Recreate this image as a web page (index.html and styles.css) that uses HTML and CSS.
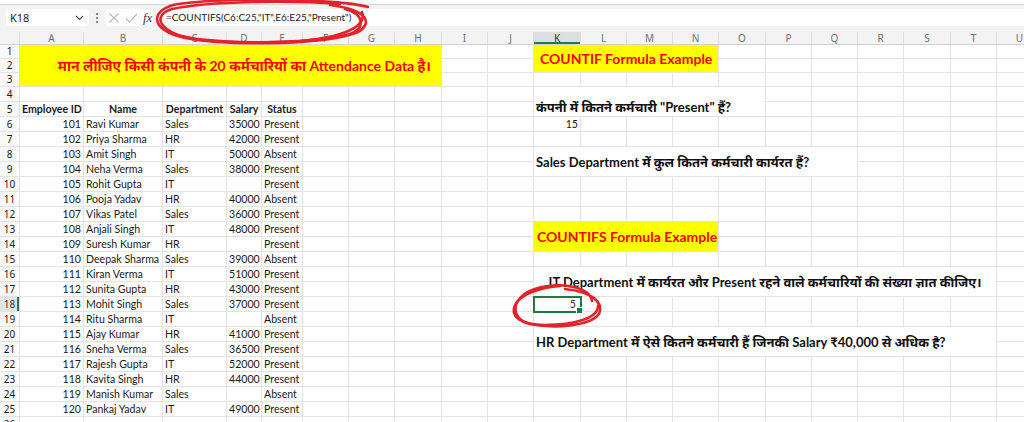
FILE: index.html
```html
<!DOCTYPE html>
<html lang="hi">
<head>
<meta charset="utf-8">
<title>COUNTIFS Example</title>
<link rel="stylesheet" href="styles.css">
</head>
<body>
<div class="app">
  <div class="ribbon-edge"></div>
  <div class="fbar">
    <div class="namebox">
      <span>K18</span>
      <svg class="chev" width="9" height="6" viewBox="0 0 9 6"><path d="M1 1 L4.5 4.5 L8 1" fill="none" stroke="#444" stroke-width="1.1"/></svg>
    </div>
    <div class="vdots"><i></i><i></i><i></i></div>
    <div class="fxbox">
      <svg width="12" height="12" viewBox="0 0 12 12"><path d="M1.5 1.5 L10.5 10.5 M10.5 1.5 L1.5 10.5" stroke="#b8b8b8" stroke-width="1.1"/></svg>
      <svg width="13" height="12" viewBox="0 0 13 12"><path d="M1 6.5 L4.5 10 L12 2" fill="none" stroke="#b8b8b8" stroke-width="1.1"/></svg>
      <span class="fx">fx</span>
    </div>
    <div class="formula">=COUNTIFS(C6:C25,"IT",E6:E25,"Present")</div>
  </div>
  <table class="sheet">
    <colgroup>
      <col class="w20"><col class="w64"><col class="w79"><col class="w64"><col class="w35"><col class="w41">
      <col class="w46"><col class="w46"><col class="w47"><col class="w46"><col class="w46">
      <col class="w47"><col class="w46"><col class="w46"><col class="w46"><col class="w47">
      <col class="w46"><col class="w46"><col class="w46"><col class="w47"><col class="w46"><col class="w46">
    </colgroup>
    <thead>
      <tr class="colhead">
        <th class="corner"></th><th>A</th><th>B</th><th>C</th><th>D</th><th>E</th><th>F</th><th>G</th><th>H</th><th>I</th><th>J</th><th class="active">K</th><th>L</th><th>M</th><th>N</th><th>O</th><th>P</th><th>Q</th><th>R</th><th>S</th><th>T</th><th>U</th>
      </tr>
    </thead>
    <tbody>
      <tr class="h14"><th>1</th><td colspan="8" rowspan="3" class="title">मान लीजिए किसी कंपनी के 20 कर्मचारियों का Attendance Data है।</td><td></td><td></td><td colspan="4" rowspan="2" class="banner">COUNTIF Formula Example</td><td></td><td></td><td></td><td></td><td></td><td></td><td></td></tr>
      <tr class="h14"><th>2</th><td></td><td></td><td></td><td></td><td></td><td></td><td></td><td></td><td></td></tr>
      <tr class="h14"><th>3</th><td></td><td></td><td></td><td></td><td></td><td></td><td></td><td></td><td></td><td></td><td></td><td></td><td></td></tr>
      <tr><th>4</th><td></td><td></td><td></td><td></td><td></td><td></td><td></td><td></td><td></td><td></td><td colspan="5" rowspan="2" class="q q-bottom">कंपनी में कितने कर्मचारी "Present" हैं?</td><td></td><td></td><td></td><td></td><td></td><td></td></tr>
      <tr><th>5</th><td class="hd">Employee ID</td><td class="hd">Name</td><td class="hd">Department</td><td class="hd">Salary</td><td class="hd">Status</td><td></td><td></td><td></td><td></td><td></td><td></td><td></td><td></td><td></td><td></td><td></td></tr>
      <tr><th>6</th><td class="n">101</td><td>Ravi Kumar</td><td>Sales</td><td class="n">35000</td><td>Present</td><td></td><td></td><td></td><td></td><td></td><td class="n">15</td><td></td><td></td><td></td><td></td><td></td><td></td><td></td><td></td><td></td><td></td></tr>
      <tr><th>7</th><td class="n">102</td><td>Priya Sharma</td><td>HR</td><td class="n">42000</td><td>Present</td><td></td><td></td><td></td><td></td><td></td><td></td><td></td><td></td><td></td><td></td><td></td><td></td><td></td><td></td><td></td><td></td></tr>
      <tr><th>8</th><td class="n">103</td><td>Amit Singh</td><td>IT</td><td class="n">50000</td><td>Absent</td><td></td><td></td><td></td><td></td><td></td><td colspan="7" rowspan="2" class="q">Sales Department में कुल कितने कर्मचारी कार्यरत हैं?</td><td></td><td></td><td></td><td></td></tr>
      <tr><th>9</th><td class="n">104</td><td>Neha Verma</td><td>Sales</td><td class="n">38000</td><td>Present</td><td></td><td></td><td></td><td></td><td></td><td></td><td></td><td></td><td></td></tr>
      <tr><th>10</th><td class="n">105</td><td>Rohit Gupta</td><td>IT</td><td class="n"></td><td>Present</td><td></td><td></td><td></td><td></td><td></td><td></td><td></td><td></td><td></td><td></td><td></td><td></td><td></td><td></td><td></td><td></td></tr>
      <tr><th>11</th><td class="n">106</td><td>Pooja Yadav</td><td>HR</td><td class="n">40000</td><td>Absent</td><td></td><td></td><td></td><td></td><td></td><td></td><td></td><td></td><td></td><td></td><td></td><td></td><td></td><td></td><td></td><td></td></tr>
      <tr><th>12</th><td class="n">107</td><td>Vikas Patel</td><td>Sales</td><td class="n">36000</td><td>Present</td><td></td><td></td><td></td><td></td><td></td><td></td><td></td><td></td><td></td><td></td><td></td><td></td><td></td><td></td><td></td><td></td></tr>
      <tr><th>13</th><td class="n">108</td><td>Anjali Singh</td><td>IT</td><td class="n">48000</td><td>Present</td><td></td><td></td><td></td><td></td><td></td><td colspan="4" rowspan="2" class="banner b2">COUNTIFS Formula Example</td><td></td><td></td><td></td><td></td><td></td><td></td><td></td></tr>
      <tr><th>14</th><td class="n">109</td><td>Suresh Kumar</td><td>HR</td><td class="n"></td><td>Present</td><td></td><td></td><td></td><td></td><td></td><td></td><td></td><td></td><td></td><td></td><td></td><td></td></tr>
      <tr><th>15</th><td class="n">110</td><td>Deepak Sharma</td><td>Sales</td><td class="n">39000</td><td>Absent</td><td></td><td></td><td></td><td></td><td></td><td></td><td></td><td></td><td></td><td></td><td></td><td></td><td></td><td></td><td></td><td></td></tr>
      <tr><th>16</th><td class="n">111</td><td>Kiran Verma</td><td>IT</td><td class="n">51000</td><td>Present</td><td></td><td></td><td></td><td></td><td></td><td colspan="10" rowspan="2" class="q center">IT Department में कार्यरत और Present रहने वाले कर्मचारियों की संख्या ज्ञात कीजिए।</td><td></td></tr>
      <tr><th>17</th><td class="n">112</td><td>Sunita Gupta</td><td>HR</td><td class="n">43000</td><td>Present</td><td></td><td></td><td></td><td></td><td></td><td></td></tr>
      <tr><th class="rowact">18</th><td class="n">113</td><td>Mohit Singh</td><td>Sales</td><td class="n">37000</td><td>Present</td><td></td><td></td><td></td><td></td><td></td><td class="n sel">5</td><td></td><td></td><td></td><td></td><td></td><td></td><td></td><td></td><td></td><td></td></tr>
      <tr><th>19</th><td class="n">114</td><td>Ritu Sharma</td><td>IT</td><td class="n"></td><td>Absent</td><td></td><td></td><td></td><td></td><td></td><td></td><td></td><td></td><td></td><td></td><td></td><td></td><td></td><td></td><td></td><td></td></tr>
      <tr><th>20</th><td class="n">115</td><td>Ajay Kumar</td><td>HR</td><td class="n">41000</td><td>Present</td><td></td><td></td><td></td><td></td><td></td><td colspan="10" rowspan="2" class="q">HR Department में ऐसे कितने कर्मचारी हैं जिनकी Salary ₹40,000 से अधिक है?</td><td></td></tr>
      <tr><th>21</th><td class="n">116</td><td>Sneha Verma</td><td>Sales</td><td class="n">36500</td><td>Present</td><td></td><td></td><td></td><td></td><td></td><td></td></tr>
      <tr><th>22</th><td class="n">117</td><td>Rajesh Gupta</td><td>IT</td><td class="n">52000</td><td>Present</td><td></td><td></td><td></td><td></td><td></td><td></td><td></td><td></td><td></td><td></td><td></td><td></td><td></td><td></td><td></td><td></td></tr>
      <tr><th>23</th><td class="n">118</td><td>Kavita Singh</td><td>HR</td><td class="n">44000</td><td>Present</td><td></td><td></td><td></td><td></td><td></td><td></td><td></td><td></td><td></td><td></td><td></td><td></td><td></td><td></td><td></td><td></td></tr>
      <tr><th>24</th><td class="n">119</td><td>Manish Kumar</td><td>Sales</td><td class="n"></td><td>Absent</td><td></td><td></td><td></td><td></td><td></td><td></td><td></td><td></td><td></td><td></td><td></td><td></td><td></td><td></td><td></td><td></td></tr>
      <tr><th>25</th><td class="n">120</td><td>Pankaj Yadav</td><td>IT</td><td class="n">49000</td><td>Present</td><td></td><td></td><td></td><td></td><td></td><td></td><td></td><td></td><td></td><td></td><td></td><td></td><td></td><td></td><td></td><td></td></tr>
      <tr><th>26</th><td></td><td></td><td></td><td></td><td></td><td></td><td></td><td></td><td></td><td></td><td></td><td></td><td></td><td></td><td></td><td></td><td></td><td></td><td></td><td></td><td></td></tr>
    </tbody>
  </table>
  <svg class="ink" width="1024" height="422" viewBox="0 0 1024 422">
    <g fill="none" stroke="#e3222b" stroke-width="2.6" stroke-linecap="round" stroke-linejoin="round">
      <path d="M368 7 C340 -1 230 -3 178 4 C150 9 148 30 185 38 C235 47 330 44 358 32 C372 24 370 10 330 5"/>
      <path d="M340 4 C290 0 210 1 172 9 C152 15 156 33 200 40 C250 45 320 42 350 34 C366 28 364 14 345 9"/>
      <path d="M362 12 C366 22 356 36 300 41 C250 44 190 42 168 32"/>
      <path d="M592 301 C590 287 560 281 535 289 C512 296 508 318 530 324 C555 329 590 326 599 314 C604 302 592 292 565 289"/>
      <path d="M598 306 C598 318 575 325 545 325 C520 325 510 316 515 305 C520 295 540 287 560 286"/>
    </g>
  </svg>
</div>
</body>
</html>
```

FILE: styles.css
```css
* { box-sizing: border-box; }
html, body { margin: 0; padding: 0; }
body {
  width: 1024px;
  height: 422px;
  overflow: hidden;
  background: #ffffff;
  font-family: "Lato", "Noto Sans", sans-serif;
}
.app { position: relative; width: 1024px; height: 422px; overflow: hidden; }

.ribbon-edge { height: 5px; background: #ffffff; border-bottom: 1px solid #d6d6d6; }

.fbar {
  height: 27px;
  background: #f3f3f3;
  display: flex;
  align-items: flex-start;
  padding: 4px 0 0 6px;
}
.namebox {
  width: 83px;
  height: 17px;
  background: #ffffff;
  border-radius: 4px;
  display: flex;
  align-items: center;
  justify-content: space-between;
  padding: 0 5px 0 4px;
  font-family: "Noto Sans", sans-serif;
  font-size: 11px;
  color: #222;
}
.vdots {
  width: 16px;
  height: 17px;
  display: flex;
  flex-direction: column;
  align-items: center;
  justify-content: center;
  gap: 2px;
}
.vdots i { display: block; width: 2px; height: 2px; background: #666; border-radius: 1px; }
.fxbox {
  width: 48px;
  height: 17px;
  background: #ffffff;
  border-radius: 4px;
  display: flex;
  align-items: center;
  gap: 5px;
  padding-left: 3px;
}
.fx {
  font-family: "Liberation Serif", serif;
  font-style: italic;
  font-size: 13px;
  color: #333;
  line-height: 1;
}
.formula {
  flex: 1;
  height: 17px;
  margin-left: 3px;
  background: #ffffff;
  font-family: "Lato", sans-serif;
  font-size: 10px;
  line-height: 17px;
  color: #222;
  padding-left: 10px;
  white-space: nowrap;
}

.sheet {
  border-collapse: separate;
  border-spacing: 0;
  table-layout: fixed;
  width: 1043px;
}
.w20 { width: 20px; } .w35 { width: 35px; } .w41 { width: 41px; } .w46 { width: 46px; }
.w47 { width: 47px; } .w64 { width: 64px; } .w79 { width: 79px; }

.sheet td, .sheet th {
  border-right: 1px solid #e3e3e3;
  border-bottom: 1px solid #e3e3e3;
  padding: 0 2px;
  white-space: nowrap;
  overflow: visible;
  height: 15px;
  line-height: 13px;
  font-size: 10.6px;
  color: #1a1a1a;
  vertical-align: middle;
  text-align: left;
  font-weight: normal;
}
.sheet tr.h14 td, .sheet tr.h14 th { height: 14px; }

.colhead th {
  height: 13px;
  background: #f3f3f3;
  color: #707070;
  font-family: "Noto Sans", sans-serif;
  font-size: 10px;
  text-align: center;
  border-right: 1px solid #dcdcdc;
  border-bottom: 1px solid #d2d2d2;
  line-height: 12px;
  padding: 0;
}
.colhead th.active { background: #dedede; color: #333; box-shadow: inset 0 -2px 0 #1e7b45; }
.colhead th.corner { background: #f3f3f3; }

tbody th {
  background: #f9f9f9;
  color: #666;
  font-family: "Noto Sans", sans-serif;
  font-size: 10px !important;
  text-align: center !important;
  padding: 0 !important;
  border-right: 1px solid #dcdcdc !important;
}
tbody th.rowact { background: #e4e4e4; color: #333; box-shadow: inset -2px 0 0 #1e7b45; }

.sheet td.n { text-align: right; }
.sheet td.hd { font-weight: 700; text-align: center; }

.sheet td.title {
  background: #ffff00;
  color: #ff0000;
  font-weight: 700;
  font-size: 14px;
  text-align: center;
  line-height: 18px;
  padding-left: 30px;
}
.sheet td.banner {
  background: #ffff00;
  color: #ff0000;
  font-weight: 700;
  font-size: 14px;
  line-height: 20px;
  padding-left: 6px;
}
.sheet td.banner.b2 { padding-left: 3px; }

.sheet td.q {
  font-weight: 700;
  font-size: 13px;
  line-height: 18px;
  color: #111;
}
.sheet td.q-bottom { vertical-align: bottom; }
.sheet td.center { text-align: center; }

.sheet td.sel {
  position: relative;
  outline: 2px solid #1f7a45;
  outline-offset: -1px;
  color: #333;
  padding-right: 4px;
}
.sheet td.sel::after {
  content: "";
  position: absolute;
  right: -3px;
  bottom: -3px;
  width: 5px;
  height: 5px;
  background: #1f7a45;
  border: 1px solid #ffffff;
}

.ink { position: absolute; left: 0; top: 0; pointer-events: none; }
```
